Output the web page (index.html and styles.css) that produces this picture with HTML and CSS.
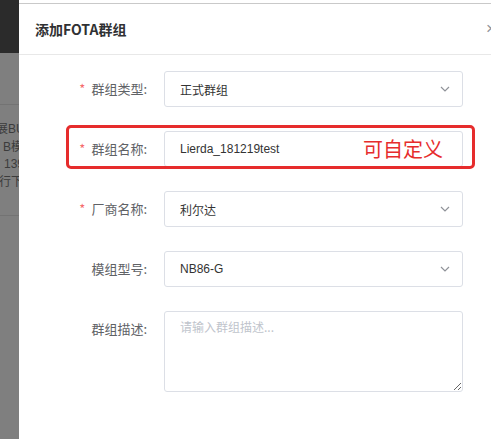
FILE: index.html
```html
<!DOCTYPE html>
<html lang="zh-CN">
<head>
<meta charset="utf-8">
<title>添加FOTA群组</title>
<link rel="stylesheet" href="styles.css">
</head>
<body>
<div class="page">
  <div class="backdrop">
    <div class="bd-top"></div>
    <div class="bd-band"></div>
    <div class="bd-text">
      <div class="l1">展BU</div>
      <div class="l2">B模</div>
      <div class="l3">139</div>
      <div class="l4">行下</div>
    </div>
    <div class="bd-rest"></div>
  </div>
  <div class="modal">
    <div class="modal-header">
      <span class="title">添加FOTA群组</span>
      <span class="close">×</span>
    </div>
    <div class="form">
      <div class="row">
        <div class="label"><span class="req">*</span>群组类型:</div>
        <div class="control select"><span>正式群组</span><svg class="chev" width="10" height="6" viewBox="0 0 10 6"><polyline points="1,1 5,5 9,1" fill="none" stroke="#909399" stroke-width="1.2"/></svg></div>
      </div>
      <div class="row">
        <div class="label"><span class="req">*</span>群组名称:</div>
        <div class="control"><span class="latin">Lierda_181219test</span></div>
      </div>
      <div class="row">
        <div class="label"><span class="req">*</span>厂商名称:</div>
        <div class="control select"><span>利尔达</span><svg class="chev" width="10" height="6" viewBox="0 0 10 6"><polyline points="1,1 5,5 9,1" fill="none" stroke="#909399" stroke-width="1.2"/></svg></div>
      </div>
      <div class="row">
        <div class="label">模组型号:</div>
        <div class="control select"><span class="latin">NB86-G</span><svg class="chev" width="10" height="6" viewBox="0 0 10 6"><polyline points="1,1 5,5 9,1" fill="none" stroke="#909399" stroke-width="1.2"/></svg></div>
      </div>
      <div class="row">
        <div class="label">群组描述:</div>
        <textarea class="textarea" placeholder="请输入群组描述..."></textarea>
      </div>
      <div class="annot"><span class="annot-text">可自定义</span></div>
    </div>
  </div>
</div>
</body>
</html>
```
FILE: styles.css
```css
html, body {
  margin: 0;
  padding: 0;
  overflow: hidden;
  background: #ffffff;
}
body {
  font-family: "Liberation Sans", "Noto Sans CJK SC", sans-serif;
  width: 491px;
  height: 439px;
}
.page {
  display: flex;
  width: 491px;
  height: 439px;
  overflow: hidden;
}
.backdrop {
  width: 19px;
  flex: none;
  background: #7f7f7f;
  overflow: hidden;
  display: flex;
  flex-direction: column;
}
.bd-top {
  height: 53px;
  background: #2b2b2b;
  flex: none;
}
.bd-band {
  height: 51px;
  border-bottom: 1px solid #737373;
  flex: none;
}
.bd-text {
  height: 111px;
  border-bottom: 1px solid #737373;
  padding-top: 16px;
  box-sizing: border-box;
  font-family: "Liberation Sans", "Noto Sans CJK SC", sans-serif;
  font-size: 12px;
  line-height: 17.7px;
  color: #3c3c3c;
  white-space: nowrap;
  flex: none;
}
.bd-text .l1 { margin-left: -4px; }
.bd-text .l2 { margin-left: 3px; }
.bd-text .l3 { margin-left: 4px; }
.bd-text .l4 { margin-left: -1px; }
.bd-rest { flex: 1; }

.modal {
  flex: none;
  width: 488px;
  background: #ffffff;
  padding-top: 3px;
  display: flex;
  flex-direction: column;
}
.modal-header {
  border-top: 1px solid #c9c9c9;
  height: 50px;
  border-bottom: 1px solid #e8e8e8;
  display: flex;
  align-items: center;
  justify-content: space-between;
  padding: 0 11px 0 16px;
}
.title {
  font-family: "Noto Sans CJK SC", sans-serif;
  font-size: 14px;
  font-weight: bold;
  color: #303133;
}
.close {
  font-family: "Liberation Sans", sans-serif;
  font-size: 17px;
  color: #909399;
}
.form {
  position: relative;
  padding-top: 16px;
}
.row {
  display: flex;
  align-items: flex-start;
  margin-bottom: 24px;
}
.label {
  width: 128px;
  padding-right: 17px;
  text-align: right;
  font-family: "Noto Sans CJK SC", sans-serif;
  font-size: 13px;
  line-height: 36px;
  color: #606266;
  flex: none;
}
.req {
  color: #f56c6c;
  margin-right: 6px;
}
.control {
  width: 299px;
  height: 36px;
  box-sizing: border-box;
  border: 1px solid #dcdfe6;
  border-radius: 3px;
  display: flex;
  align-items: center;
  justify-content: space-between;
  padding: 0 12px 0 15px;
  font-family: "Noto Sans CJK SC", sans-serif;
  font-size: 12px;
  color: #333333;
}
.latin {
  font-family: "Liberation Sans", sans-serif;
}
.chev {
  flex: none;
}
.textarea {
  width: 299px;
  height: 81px;
  box-sizing: border-box;
  border: 1px solid #dcdfe6;
  border-radius: 3px;
  padding: 5px 15px;
  margin: 0;
  font-family: "Noto Sans CJK SC", sans-serif;
  font-size: 12px;
  line-height: 20px;
  color: #333333;
  resize: vertical;
  outline: none;
}
.textarea::placeholder {
  color: #c0c4cc;
}
.annot {
  position: absolute;
  left: 47px;
  top: 70px;
  width: 409px;
  height: 44px;
  box-sizing: border-box;
  border: 3px solid #e62c2c;
  border-radius: 5px;
  display: flex;
  align-items: center;
  justify-content: flex-end;
  padding: 3px 29px 0 0;
}
.annot-text {
  font-family: "Noto Sans CJK SC", sans-serif;
  font-size: 20px;
  line-height: 24px;
  color: #e62c2c;
}
```
